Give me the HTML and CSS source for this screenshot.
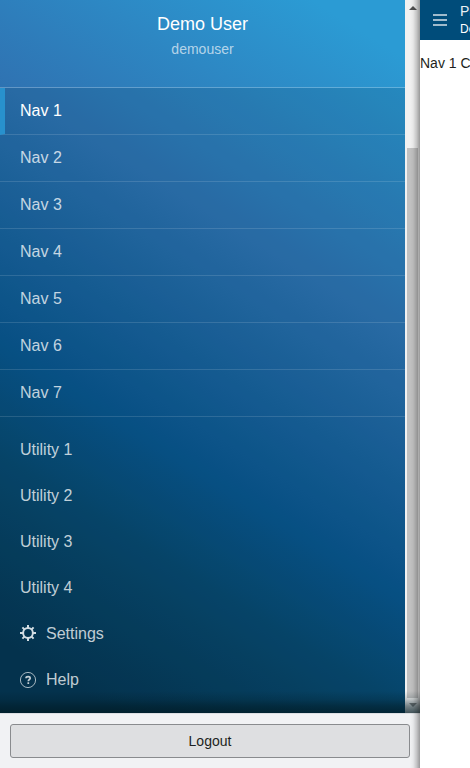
FILE: index.html
```html
<!DOCTYPE html>
<html lang="en">
<head>
<meta charset="utf-8">
<title>Navigation</title>
<link rel="stylesheet" href="styles.css">
</head>
<body>
<div class="app">
  <aside class="drawer">
    <div class="drawer-body">
      <div class="menu">
        <header class="profile">
          <div class="profile-name">Demo User</div>
          <div class="profile-id">demouser</div>
        </header>
        <div class="menu-content">
          <nav class="nav">
            <a class="nav-item active">Nav 1</a>
            <a class="nav-item">Nav 2</a>
            <a class="nav-item">Nav 3</a>
            <a class="nav-item">Nav 4</a>
            <a class="nav-item">Nav 5</a>
            <a class="nav-item">Nav 6</a>
            <a class="nav-item">Nav 7</a>
          </nav>
          <div class="utilities">
            <a class="utility">Utility 1</a>
            <a class="utility">Utility 2</a>
            <a class="utility">Utility 3</a>
            <a class="utility">Utility 4</a>
            <a class="utility">
              <svg class="icon gear" viewBox="0 0 16 16"><g fill="none" stroke="currentColor"><circle cx="8" cy="8" r="4.9" stroke-width="2"/><path stroke-width="2" d="M8 0v3M8 13v3M0 8h3M13 8h3M2.400 2.400l2.200 2.200M11.400 11.400l2.200 2.200M2.400 13.600l2.200-2.200M11.400 4.600l2.200-2.200"/></g></svg>
              Settings
            </a>
            <a class="utility">
              <svg class="icon" viewBox="0 0 16 16"><g fill="none" stroke="currentColor"><circle cx="8" cy="8" r="7.600" stroke-width=".85"/><path stroke-width="1.700" d="M6 6.200C6.100 5 6.900 4.600 8.100 4.600s2.100.6 2.100 1.600C10.200 7.600 8.300 7.500 8.300 9.300M8.300 10.200v1.700"/></g></svg>
              Help
            </a>
          </div>
        </div>
      </div>
      <div class="scrollbar">
        <svg class="arrow" viewBox="0 0 8 4"><path d="M0 4L4 0l4 4z"/></svg>
        <div class="thumb"></div>
        <svg class="arrow down" viewBox="0 0 8 4"><path d="M0 0h8L4 4z"/></svg>
      </div>
    </div>
    <footer class="drawer-footer"><button class="logout">Logout</button></footer>
  </aside>
  <main class="page">
    <div class="toolbar">
      <svg class="burger" viewBox="0 0 14 12"><path fill="currentColor" d="M0 .3h14v1.500H0zM0 5.300h14v1.500H0zM0 10.200h14v1.500H0z"/></svg>
      <div class="titles"><div class="title">Product</div><div class="subtitle">Demo</div></div>
    </div>
    <div class="content">Nav 1 Content</div>
  </main>
</div>
</body>
</html>
```
FILE: styles.css
```css
* { box-sizing: border-box; }
body { margin: 0; font-family: "Liberation Sans", Arial, sans-serif; background: #fff; overflow: hidden; }
.app { display: flex; width: 470px; height: 768px; overflow: hidden; }
.drawer { position: relative; display: flex; flex-direction: column; flex: 0 0 420px; }
.drawer::after {
  content: ""; position: absolute; top: 0; right: 0; bottom: 0; width: 10px;
  background: linear-gradient(to right, transparent, rgba(0,0,0,.04) 30%, rgba(0,0,0,.18) 65%, rgba(0,0,0,.37));
}
.drawer-body { position: relative; display: flex; height: 713px; }
.drawer-body::after {
  content: ""; position: absolute; left: 0; right: 0; bottom: 0; height: 22px;
  background: linear-gradient(to bottom, transparent, rgba(0,25,33,.2) 38%, rgba(0,25,33,.5) 68%, rgba(0,25,33,.72));
}
.menu {
  flex: 1;
  background: linear-gradient(32deg, #05334f 0, #05334f 62px, #063e5e 142px, #08486e 219px, #09558d 314px, #2f74b3 541px, #2b9bd4 770px, #2b9bd4 819px);
}
.profile { height: 88px; padding-top: 13px; text-align: center; border-bottom: 1px solid rgba(255,255,255,.25); }
.profile-name { font-size: 18px; line-height: 22px; color: #fff; }
.profile-id { margin-top: 5px; font-size: 14px; line-height: 18px; color: rgba(255,255,255,.65); }
.menu-content { height: 625px; background: rgba(0,44,66,.13); }
.nav-item { display: block; height: 47px; padding-left: 20px; font-size: 16px; line-height: 46px; color: rgba(255,255,255,.75); border-bottom: 1px solid rgba(255,255,255,.13); }
.nav-item.active { padding-left: 15px; color: #fff; border-left: 5px solid #2891cd; }
.utilities { padding-top: 10px; }
.utility { display: flex; align-items: center; gap: 10px; height: 46px; padding-left: 20px; font-size: 16px; color: rgba(255,255,255,.76); }
.icon { width: 16px; height: 16px; }
.gear { position: relative; top: -1px; color: #d3dde3; }
.scrollbar { display: flex; flex-direction: column; align-items: center; width: 15px; padding: 6px 0; background: #f1f1f1; }
.arrow { width: 8px; height: 4px; fill: #505050; }
.arrow.down { fill: #8c8c8c; }
.thumb { width: 11px; height: 550px; margin: 138px 0 5px; background: #c1c1c1; }
.drawer-footer { height: 55px; padding: 10px; background: #f1f2f4; border-top: 1px solid #dcdee2; }
.logout { display: block; width: 400px; height: 34px; padding: 0; border: 1px solid #898b8e; border-radius: 3px; background: #dedfe1; color: #1c1f21; font: 14px "Liberation Sans", Arial, sans-serif; }
.page { flex: 1; min-width: 0; overflow: hidden; }
.toolbar { display: flex; height: 40px; background: #004c7a; color: #d5e0e8; }
.burger { flex: 0 0 14px; height: 12px; margin: 14px 13px 0; }
.titles { color: #eaf0f4; }
.title { margin-top: 3px; font-size: 14px; line-height: 17px; }
.subtitle { font-size: 12px; line-height: 18px; color: #fff; }
.content { padding-top: 15px; font-size: 14px; line-height: 16px; color: #1c1f21; white-space: nowrap; }
```
